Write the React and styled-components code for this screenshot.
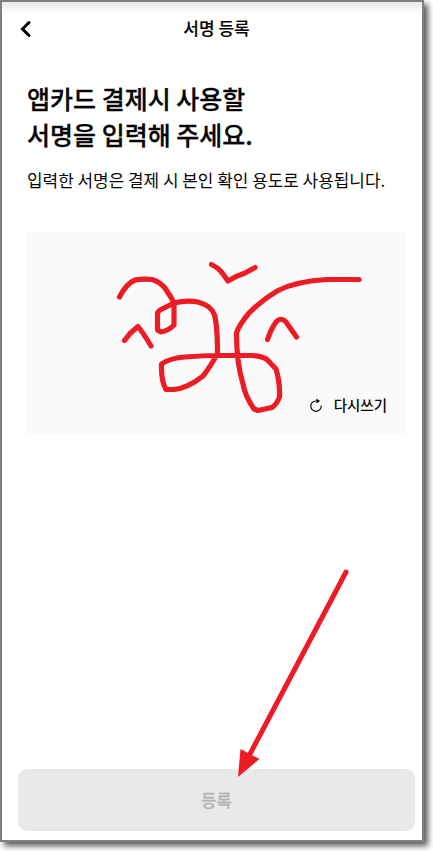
import React from 'react';
import styled, { createGlobalStyle } from 'styled-components';

const GlobalStyle = createGlobalStyle`
  * {
    box-sizing: border-box;
  }
  body {
    margin: 0;
    min-height: 851px;
    background: #fff;
    font-family: 'Noto Sans CJK KR', 'Noto Sans', sans-serif;
    color: #060606;
  }
`;

const Page = styled.div`
  width: 433px;
  height: 851px;
  overflow: hidden;
  background: #fff;
`;

const Screen = styled.div`
  position: relative;
  display: flex;
  flex-direction: column;
  width: 424px;
  height: 842px;
  border: 2px solid #808080;
  background: linear-gradient(#ebebeb, #fff 13px);
  box-shadow: 4px 4px 6px rgba(0, 0, 0, 0.65);
`;

const Header = styled.header`
  display: grid;
  grid-template-columns: 20px 1fr 20px;
  align-items: center;
  height: 52px;
  padding: 0 7px 0 16px;
`;

const BackButton = styled.button`
  display: flex;
  padding: 0;
  border: none;
  background: none;
  color: #000;
`;

const Title = styled.h1`
  margin: 0;
  font-size: 17px;
  line-height: 24px;
  font-weight: 500;
  text-align: center;
  -webkit-text-stroke: 0.15px currentColor;
`;

const Content = styled.main`
  flex: 1;
  padding: 26px 15px 0 25px;
`;

const Heading = styled.h2`
  margin: 0;
  font-size: 25px;
  line-height: 36px;
  font-weight: 500;
  white-space: nowrap;
  -webkit-text-stroke: 0.3px currentColor;
`;

const Description = styled.p`
  margin: 15px 0 0;
  font-size: 16.93px;
  line-height: 26px;
  white-space: nowrap;
`;

const SignPad = styled.section`
  position: relative;
  display: flex;
  justify-content: flex-end;
  align-items: flex-end;
  height: 203px;
  margin-top: 38px;
  padding: 0 20px 18px 0;
  background: #fafafa;
`;

const Signature = styled.svg`
  position: absolute;
  inset: 0;
  width: 100%;
  height: 100%;
`;

const RetryButton = styled.button`
  position: relative;
  display: flex;
  align-items: center;
  gap: 11px;
  padding: 0;
  border: none;
  background: none;
  color: #060606;
  font-family: inherit;
  font-size: 14.5px;
  line-height: 22px;
  font-weight: 500;
`;

const Footer = styled.footer`
  padding: 0 7px 9px 16px;
`;

const SubmitButton = styled.button`
  display: block;
  width: 100%;
  height: 62px;
  padding: 0;
  border: none;
  border-radius: 9px;
  background: #e9e9e9;
  color: #b4b4b4;
  font-family: inherit;
  font-size: 16.5px;
  font-weight: 500;
  -webkit-text-stroke: 0.3px currentColor;
`;

const Arrow = styled.svg`
  position: absolute;
  left: 228px;
  top: 558px;
  pointer-events: none;
`;

const App = () => {
  return (
    <Page>
      <GlobalStyle />
      <Screen>
        <Header>
          <BackButton aria-label="뒤로">
            <svg width="16" height="20" viewBox="0 0 16 20" fill="none">
              <path d="M11 4.5 4.5 11 11 17.5" stroke="currentColor" strokeWidth="3" strokeLinecap="round" strokeLinejoin="miter" />
            </svg>
          </BackButton>
          <Title>서명 등록</Title>
        </Header>

        <Content>
          <Heading>
            앱카드 결제시 사용할
            <br />
            서명을 입력해 주세요.
          </Heading>
          <Description>입력한 서명은 결제 시 본인 확인 용도로 사용됩니다.</Description>

          <SignPad>
            <Signature
              viewBox="27 231 380 203"
              fill="none"
              stroke="#ed1c24"
              strokeWidth="5.2"
              strokeLinecap="round"
              strokeLinejoin="round"
            >
              <path d="M119.5 297C123 290 128 283 135 280Q143 278.500 152 279.500Q160 282 165 288L172 299L174 304V325Q168 331 161 332L157.500 330V313Q158 311 162 309L174 303Q186 300 198 302Q212 306 214.500 315Q217.500 327 217.500 354Q208 370 203 376Q188 388 174 389.500H166Q161 381 161.500 364Q170 358 185 357Q203 355.500 220 355.500H252Q262 356 267 359.500L276 369Q280 382 279.500 397Q277 404 272 407.500L258 410.500L254 409Q245 396 243 384C239 371 236.500 355 236.500 333Q239 325 249 313Q262 300 278 290.500C292 283.500 308 280.500 327 279.500H359" />
              <path d="M211.500 264.500Q217 267 221.500 272L228 281Q237 275.500 245 273L255 267.500" />
              <path d="M124.500 340.500L130 333.500L138 326.500Q144 334 151 346" />
              <path d="M267.500 339.500Q271 329 276 322Q281 316.500 286 322L296.500 337" />
            </Signature>
            <RetryButton>
              <svg width="14" height="14" viewBox="0 0 14 14" fill="none">
                <path d="M9 3H6.300A5.200 5.200 0 1 0 12.200 8" stroke="currentColor" strokeWidth="1.200" strokeLinecap="round" />
                <path d="M7.500 .5 11 3 7.500 5.500Z" fill="currentColor" />
              </svg>
              다시쓰기
            </RetryButton>
          </SignPad>
        </Content>

        <Footer>
          <SubmitButton disabled>등록</SubmitButton>
        </Footer>

        <Arrow width="130" height="222" viewBox="230 560 130 222">
          <path d="M346 572 250 754" stroke="#ed1c24" strokeWidth="5" strokeLinecap="round" />
          <path d="M240.500 749 259.500 759 238 777Z" fill="#ed1c24" />
        </Arrow>
      </Screen>
    </Page>
  );
};

export default App;
